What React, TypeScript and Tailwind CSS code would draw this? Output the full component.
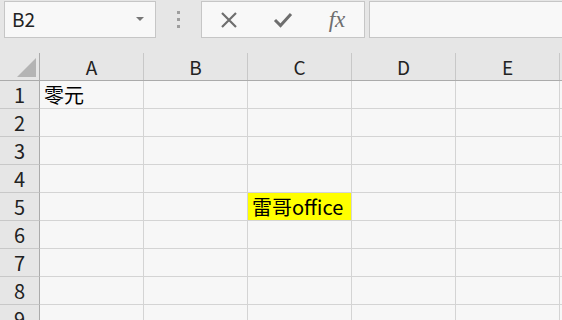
import React from "react";

const cols = ["A", "B", "C", "D", "E"];
const rows = [1, 2, 3, 4, 5, 6, 7, 8, 9];
const font = { fontFamily: '"Noto Sans CJK SC", "Noto Sans", sans-serif' };

function Cell({ r, c }: { r: number; c: string }) {
  let content: React.ReactNode = null;
  let bg = "";
  if (r === 1 && c === "A") content = "零元";
  if (r === 5 && c === "C") {
    content = "雷哥office";
    bg = "bg-[#ffff00]";
  }
  return (
    <div
      className={`w-[104px] h-[28px] shrink-0 border-r border-b border-[#d4d4d4] flex items-end pl-[4px] text-[20px] leading-[26px] text-black whitespace-nowrap overflow-visible ${bg}`}
    >
      {content}
    </div>
  );
}

export default function App() {
  return (
    <div className="w-[562px] h-[320px] overflow-hidden bg-[#e6e6e6]" style={font}>
      {/* top bar */}
      <div className="h-[53px] flex items-start pt-[1px]">
        <div className="ml-[4px] w-[152px] h-[37px] bg-[#f8f8f8] border border-[#c6c6c6] flex items-center justify-between pl-[7px] pr-[11px]">
          <span className="text-[19px] text-[#222]">B2</span>
          <svg width="8" height="5" viewBox="0 0 8 5">
            <path d="M0 0 L8 0 L4 4 Z" fill="#777" />
          </svg>
        </div>
        <div className="w-[45px] h-[37px] flex flex-col items-center justify-center gap-[4px]">
          <div className="w-[3px] h-[3px] bg-[#9e9e9e]" />
          <div className="w-[3px] h-[3px] bg-[#9e9e9e]" />
          <div className="w-[3px] h-[3px] bg-[#9e9e9e]" />
        </div>
        <div className="w-[164px] h-[37px] bg-[#f8f8f8] border border-[#c6c6c6] flex items-center">
          <div className="w-[54px] flex justify-center">
            <svg width="18" height="18" viewBox="0 0 18 18">
              <path d="M2 2 L16 16 M16 2 L2 16" stroke="#6e6e6e" strokeWidth="2.2" />
            </svg>
          </div>
          <div className="w-[54px] flex justify-center">
            <svg width="20" height="18" viewBox="0 0 20 18">
              <path d="M2 9 L7.5 14.5 L18 3" stroke="#6e6e6e" strokeWidth="3" fill="none" />
            </svg>
          </div>
          <div className="w-[54px] flex justify-center">
            <span
              className="text-[23px] italic text-[#6e6e6e] leading-none"
              style={{ fontFamily: '"Liberation Serif", "DejaVu Serif", serif' }}
            >
              fx
            </span>
          </div>
        </div>
        <div className="ml-[4px] flex-1 h-[37px] bg-[#f8f8f8] border border-[#c6c6c6] border-r-0" />
      </div>
      {/* header row */}
      <div className="flex h-[28px] border-b border-[#ababab]">
        <div className="w-[40px] shrink-0 border-r border-[#ababab] relative">
          <svg className="absolute left-[16px] top-[4px]" width="21" height="21" viewBox="0 0 21 21">
            <path d="M1 20 L20 20 L20 1 Z" fill="#b4b4b4" />
          </svg>
        </div>
        {cols.map((c) => (
          <div
            key={c}
            className="w-[104px] shrink-0 border-r border-[#c8c8c8] flex items-end justify-center text-[19px] leading-[26px] text-[#222]"
          >
            {c}
          </div>
        ))}
      </div>
      {rows.map((r) => (
        <div key={r} className="flex">
          <div className="w-[40px] h-[28px] shrink-0 border-r border-b border-[#ababab] border-b-[#c8c8c8] flex items-end justify-center text-[20px] leading-[26px] text-[#222]">
            {r}
          </div>
          <div className="flex bg-[#f7f7f7]">
            {cols.map((c) => (
              <Cell key={c} r={r} c={c} />
            ))}
          </div>
          <div className="flex-1 h-[28px] bg-[#f7f7f7] border-b border-[#d4d4d4]" />
        </div>
      ))}
    </div>
  );
}
